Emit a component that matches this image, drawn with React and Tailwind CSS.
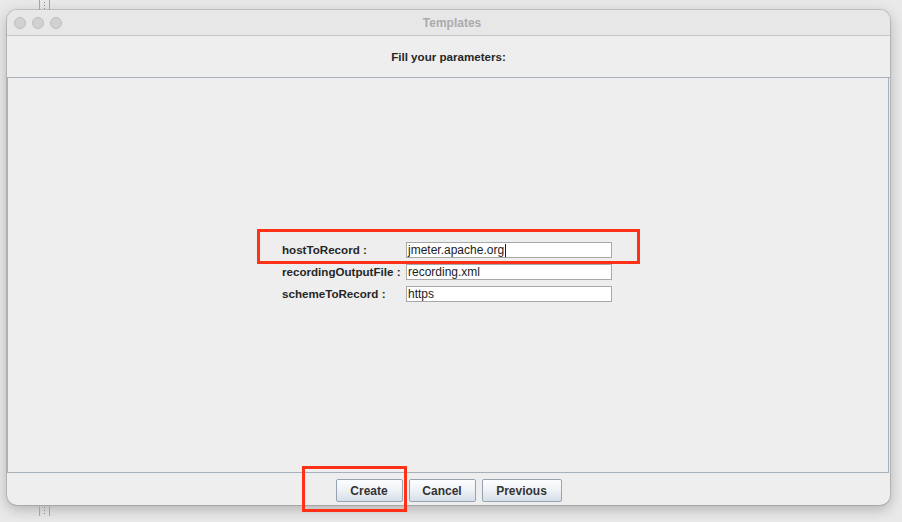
import React from "react";

const fields = [
  { name: "hostToRecord :", value: "jmeter.apache.org", caret: true },
  { name: "recordingOutputFile :", value: "recording.xml" },
  { name: "schemeToRecord :", value: "https" },
];

const Handle = ({ h }) => (
  <div className={`ml-[39px] flex ${h}`}>
    <div className="w-[1px] h-full bg-[#9ba7b5]" />
    <div className="w-[9px] h-full flex flex-col items-center justify-center gap-[2px]">
      <div className="w-[1px] h-[1px] bg-[#8a8a8a]" />
      <div className="w-[1px] h-[1px] bg-[#8a8a8a]" />
      <div className="w-[1px] h-[1px] bg-[#8a8a8a]" />
    </div>
    <div className="w-[1px] h-full bg-[#9ba7b5]" />
  </div>
);

const Button = ({ label, w }) => (
  <button
    className={`${w} h-[23px] border border-[#98a3b1] rounded-[2px] bg-gradient-to-b from-[#fcfdfe] via-[#eef2f6] to-[#d6dee8] text-[12px] font-bold text-[#333333]`}
  >
    {label}
  </button>
);

export default function App() {
  return (
    <div className="relative w-[902px] h-[522px] overflow-hidden bg-[#e9e9e9] font-['Liberation_Sans',Arial,sans-serif]">
      <Handle h="h-[10px]" />

      {/* window */}
      <div className="ml-[7px] w-[883px] h-[495px] flex flex-col rounded-[10px] overflow-hidden bg-[#eeeeee] shadow-[0_0_0_1px_rgba(0,0,0,0.13),0_4px_14px_rgba(0,0,0,0.25)]">
        {/* title bar */}
        <div className="h-[26px] flex items-center border-b border-[#c5c5c5] bg-[#e8e7e8]">
          <div className="flex-1 flex items-center gap-[6px] pl-[7px]">
            <div className="w-[12px] h-[12px] rounded-full bg-[#d1d1d1] border border-[#bdbdbd]" />
            <div className="w-[12px] h-[12px] rounded-full bg-[#d1d1d1] border border-[#bdbdbd]" />
            <div className="w-[12px] h-[12px] rounded-full bg-[#d1d1d1] border border-[#bdbdbd]" />
          </div>
          <div className="text-[12px] font-bold text-[#ababab]">Templates</div>
          <div className="flex-1" />
        </div>

        {/* header */}
        <div className="h-[42px] flex items-center justify-center border-b border-[#a6b0ba]">
          <span className="text-[11.6px] font-bold text-[#262626]">Fill your parameters:</span>
        </div>

        {/* parameters panel */}
        <div className="h-[395px] mr-[1px] border-l border-r border-b border-[#a6b0ba] pt-[164px] pl-[274px] flex flex-col gap-[6px]">
          {fields.map((f) => (
            <div key={f.name} className="h-[16px] flex items-center">
              <div className="w-[124px] text-[11.6px] font-bold text-[#262626] whitespace-nowrap">{f.name}</div>
              <div className="w-[206px] h-[16px] border border-[#a8a8a8] bg-white flex items-center pl-[1px] text-[12px] text-[#1c1c1c] leading-none">
                {f.value}
                {f.caret && <span className="w-[1px] h-[13px] bg-[#1c1c1c] ml-[1px]" />}
              </div>
            </div>
          ))}
        </div>

        {/* buttons */}
        <div className="h-[32px] flex justify-center gap-[6px] pt-[6px]">
          <Button label="Create" w="w-[67px]" />
          <Button label="Cancel" w="w-[67px]" />
          <Button label="Previous" w="w-[80px]" />
        </div>
      </div>

      <Handle h="h-[11px]" />

      {/* annotation boxes */}
      <div className="absolute left-[257px] top-[229px] w-[383px] h-[35px] border-[3px] border-[#ff3218]" />
      <div className="absolute left-[302px] top-[466px] w-[105px] h-[46px] border-[3px] border-[#ff3218]" />
    </div>
  );
}
